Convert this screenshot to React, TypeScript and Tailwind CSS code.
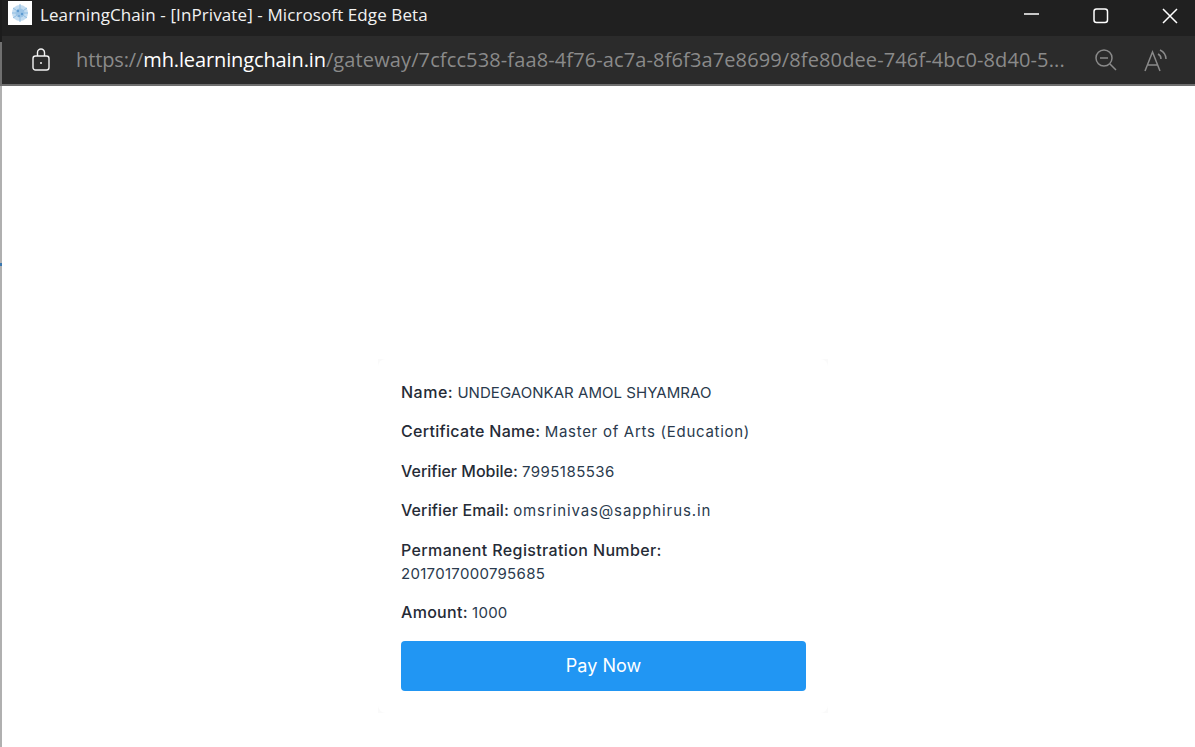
const rows = [
  { label: "Name:", labelTrack: "tracking-[0.5px]", value: "UNDEGAONKAR AMOL SHYAMRAO", track: "tracking-[0.05px]" },
  { label: "Certificate Name:", labelTrack: "tracking-[0.3px]", value: "Master of Arts (Education)", track: "tracking-[0.72px]" },
  { label: "Verifier Mobile:", labelTrack: "tracking-[0px]", value: "7995185536", track: "tracking-[0.45px]" },
  { label: "Verifier Email:", labelTrack: "tracking-[0.12px]", value: "omsrinivas@sapphirus.in", track: "tracking-[0.88px]" },
  { label: "Permanent Registration Number:", labelTrack: "tracking-[0.37px]", value: "2017017000795685", track: "tracking-[0.3px]" },
  { label: "Amount:", labelTrack: "tracking-[0.3px]", value: "1000", track: "tracking-[0.25px]" },
];

const Favicon = () => (
  <svg width="24" height="24" viewBox="0 0 24 24" className="mt-[1px] self-start bg-white">
    <circle cx="12" cy="12" r="8" fill="#c3dcf0" />
    <g stroke="#8fbde2" strokeWidth="1" fill="none">
      <path d="M12 3v18M5 7l14 10M19 7L5 17M4 12h16" />
    </g>
    <circle cx="12" cy="12" r="4.5" fill="#9cc4e6" />
    <circle cx="10" cy="10" r="1.2" fill="#5f9bd0" />
    <circle cx="14" cy="13" r="1.2" fill="#5f9bd0" />
    <circle cx="11" cy="15" r="1" fill="#6fa6d6" />
  </svg>
);

export default function App() {
  return (
    <div className="flex h-[747px] w-[1195px] overflow-hidden bg-white font-['Inter',sans-serif]">
      {/* edge of the window behind */}
      <div className="flex w-[2px] shrink-0 flex-col bg-[#b0b0b0]">
        <div className="h-[42px] bg-[#1c1c1c]" />
        <div className="h-[44px] bg-[#707070]" />
        <div className="h-[177px]" />
        <div className="h-[3px] bg-[#3a78b0]" />
      </div>

      <div className="flex min-w-0 flex-1 flex-col">
        {/* title bar */}
        <div className="flex h-[36px] shrink-0 items-center bg-[#202020] pl-[6px] pb-[4px]">
          <Favicon />
          <span className="mb-[4px] ml-[8px] font-['Open_Sans',sans-serif] text-[17px] leading-none tracking-[0.1px] text-[#f2f2f2]">
            LearningChain - [InPrivate] - Microsoft Edge Beta
          </span>
          <div className="ml-auto flex items-center pr-[17px]">
            <svg width="16" height="16" viewBox="0 0 16 16" fill="none" stroke="#fff" strokeWidth="1.5">
              <path d="M0 6h15" />
            </svg>
            <svg width="16" height="16" viewBox="0 0 16 16" fill="none" stroke="#fff" strokeWidth="1.5" className="ml-[53px]">
              <rect x="1" y="1" width="13.5" height="13.5" rx="2.5" />
            </svg>
            <svg width="16" height="16" viewBox="0 0 16 16" fill="none" stroke="#fff" strokeWidth="1.5" className="ml-[53px]">
              <path d="M1 1l14 14M15 1L1 15" />
            </svg>
          </div>
        </div>

        {/* address bar */}
        <div className="flex h-[48px] shrink-0 items-center bg-[#2b2b2b] pl-[30px] pr-[17px]">
          <svg width="18" height="24" viewBox="0 0 18 24" fill="none" stroke="#f2f2f2" strokeWidth="1.4">
            <rect x="1" y="8" width="16" height="14" rx="2.5" />
            <path d="M5.500 8V4.500a3.500 3.500 0 0 1 7 0V8" />
            <circle cx="9" cy="15" r="1" fill="#f2f2f2" stroke="none" />
          </svg>
          <div className="ml-[26px] w-[996px] overflow-hidden whitespace-nowrap font-['Open_Sans',sans-serif] text-[20px] tracking-[0.12px] text-[#8a8a8a]">
            <span className="tracking-[-0.12px]">
              https://<span className="text-white">mh.learningchain.in</span>
            </span>
            /gateway/7cfcc538-faa8-4f76-ac7a-8f6f3a7e8699/8fe80dee-746f-4bc0-8d40-5...
          </div>
          <svg width="24" height="24" viewBox="0 0 24 24" fill="none" stroke="#8a8a8a" strokeWidth="1.5" className="ml-[22px]">
            <circle cx="10" cy="10" r="8" />
            <path d="M6 10h8M16 16l6 6" />
          </svg>
          <svg width="24" height="24" viewBox="0 0 24 24" fill="none" stroke="#8a8a8a" strokeWidth="1.5" className="ml-[26px]">
            <path d="M1 23L8.500 4l7.500 19M4 17h9.500" />
            <path d="M14 6c2 1 3 3 3 5M16 2c4 2 6 5 6 9" />
          </svg>
        </div>
        <div className="h-[2px] shrink-0 bg-[#6e6e6e]" />

        <div className="flex-1 pl-[376px] pt-[273px]">
          <div className="w-[450px] bg-[#fafafa]">
            <div className="rounded-[8px] bg-white pt-[22px] pr-[22px] pb-[22px] pl-[23px] text-[15px] leading-[23.4px] text-[#2a3a4d]">
              {rows.map((row) => (
                <p key={row.label} className="mb-[16px]">
                  <span className={`text-[16px] font-medium text-[#252b36] ${row.labelTrack}`}>{row.label}</span>{" "}
                  <span className={row.track}>{row.value}</span>
                </p>
              ))}
              <button className="h-[50px] w-full rounded-[4px] bg-[#2196f3] text-[18px] text-white">Pay Now</button>
            </div>
          </div>
        </div>
      </div>
    </div>
  );
}
